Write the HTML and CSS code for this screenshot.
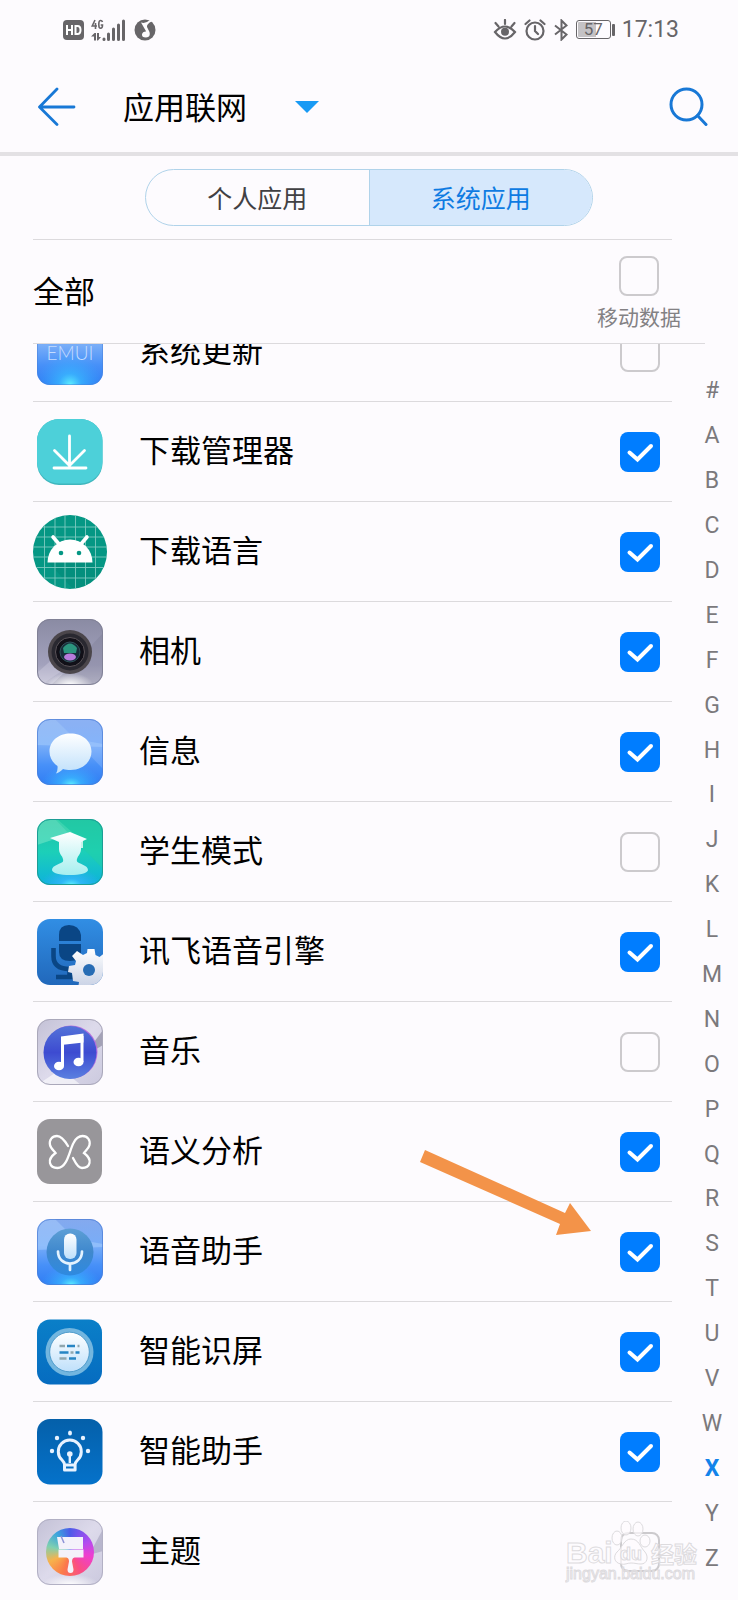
FILE: index.html
```html
<!DOCTYPE html>
<html lang="zh-CN">
<head>
<meta charset="utf-8">
<meta name="viewport" content="width=device-width, initial-scale=1">
<title>应用联网</title>
<link rel="stylesheet" href="styles.css">
</head>
<body>
<svg class="defs" width="0" height="0" aria-hidden="true">
  <defs>
    <linearGradient id="blue" x1="0" y1="0" x2="0" y2="1"><stop offset="0" stop-color="#84a9ee"/><stop offset=".4" stop-color="#78adf8"/><stop offset=".7" stop-color="#4790f8"/><stop offset="1" stop-color="#2f7df4"/></linearGradient>
    <radialGradient id="glow" cx=".5" cy="1" r=".5"><stop offset="0" stop-color="#5ff2ff"/><stop offset=".35" stop-color="#38b8ff" stop-opacity=".75"/><stop offset="1" stop-color="#3aa8ff" stop-opacity="0"/></radialGradient>
    <linearGradient id="silver" x1="0" y1="0" x2="1" y2="1"><stop offset="0" stop-color="#c3c1d6"/><stop offset=".5" stop-color="#dddaeb"/><stop offset="1" stop-color="#cbc9de"/></linearGradient>
    <linearGradient id="steel" x1="0" y1="0" x2="0" y2="1"><stop offset="0" stop-color="#8a8ba3"/><stop offset=".7" stop-color="#a3a2bd"/><stop offset="1" stop-color="#c9c8d8"/></linearGradient>
    <radialGradient id="shine" cx=".5" cy="1" r=".5"><stop offset="0" stop-color="#fff"/><stop offset="1" stop-color="#fff" stop-opacity="0"/></radialGradient>
    <linearGradient id="green" x1="0" y1="0" x2="0" y2="1"><stop offset="0" stop-color="#22c0a2"/><stop offset=".5" stop-color="#1ccfb8"/><stop offset="1" stop-color="#0db2dc"/></linearGradient>
    <linearGradient id="pearl" x1="0" y1="0" x2="0" y2="1"><stop offset="0" stop-color="#fff"/><stop offset="1" stop-color="#bfe0fb"/></linearGradient>
    <linearGradient id="mint" x1="0" y1="0" x2="0" y2="1"><stop offset="0" stop-color="#fff"/><stop offset="1" stop-color="#a5efef"/></linearGradient>
    <linearGradient id="engine" x1="0" y1="0" x2="0" y2="1"><stop offset="0" stop-color="#318ee4"/><stop offset="1" stop-color="#2168bb"/></linearGradient>
    <linearGradient id="gear" x1="0" y1="0" x2="0" y2="1"><stop offset="0" stop-color="#fff"/><stop offset="1" stop-color="#c6cfe4"/></linearGradient>
    <linearGradient id="disc" x1="0" y1="0" x2="0" y2="1"><stop offset="0" stop-color="#5373d8"/><stop offset=".5" stop-color="#3d4bd1"/><stop offset="1" stop-color="#5a80e0"/></linearGradient>
    <linearGradient id="deep" x1="0" y1="0" x2="0" y2="1"><stop offset="0" stop-color="#0a7fc8"/><stop offset="1" stop-color="#066cc0"/></linearGradient>
    <linearGradient id="deeper" x1="0" y1="0" x2="0" y2="1"><stop offset="0" stop-color="#0560aa"/><stop offset="1" stop-color="#0572ca"/></linearGradient>
    <linearGradient id="voice" x1="0" y1="0" x2="0" y2="1"><stop offset="0" stop-color="#5d9fd6"/><stop offset=".5" stop-color="#3f88cd"/><stop offset="1" stop-color="#2e8ae0"/></linearGradient>
    <clipPath id="tile"><rect x="4" y="4" width="66" height="66" rx="13"/></clipPath>
    <clipPath id="round"><circle cx="37" cy="37" r="37"/></clipPath>
    <clipPath id="wheel"><circle cx="37" cy="37" r="24"/></clipPath>
  </defs>
</svg>
<div class="app">
  <div class="status">
    <div class="status-left">
      <svg width="21" height="22" viewBox="0 0 21 22" aria-hidden="true"><rect y="1" width="21" height="20" rx="4" fill="#676568"/><path d="M4 6v10M9 6v10M4 11h5M12.500 6v10M12 7h2.500q3 0 3 4t-3 4H12" fill="none" stroke="#fff" stroke-width="2"/></svg>
      <svg width="36" height="22" viewBox="0 0 36 22" aria-hidden="true"><g fill="none" stroke="#676568" stroke-width="1.600"><path d="M4 1 1.200 7H6M4.500 4v6M11.500 3q-.7-1.800-2.200-1.500Q7.800 1.700 7.800 5.500t1.800 3.800q1.900 0 1.900-3.300H9.700"/></g><path d="M0 17.500 3.500 14H5v7.500H3v-4zM6 14h2v4h2l-3 3.500H6z" fill="#676568"/><path d="M13 20v.5M17.500 15v5.500M22.500 10v10.500M27.500 6v14.500M32.500 2v18.500" stroke="#676568" stroke-width="3" stroke-linecap="round"/></svg>
      <svg width="22" height="22" viewBox="0 0 22 22" aria-hidden="true"><circle cx="11" cy="11" r="10.500" fill="#676568"/><path d="M7 3.500q4.500 1.500 9-2.500l1.500 1.500Q12.500 5 13 8l2.500 5q1.500 5-3.500 5.500-4.500 0-4-3.500.8-3 4.200-2.500z" fill="#fdfbfe"/></svg>
    </div>
    <div class="status-right">
      <svg width="24" height="22" viewBox="0 0 24 22" aria-hidden="true"><g fill="none" stroke="#676568" stroke-width="2.200"><path d="M2 13q10-11 20 0-10 13-20 0zM12 5V1M5.500 7.500 2.500 4M18.500 7.500l3-3.500" stroke-linecap="round"/></g><circle cx="12" cy="12.800" r="4" fill="#676568"/></svg>
      <svg width="22" height="22" viewBox="0 0 22 22" aria-hidden="true"><g fill="none" stroke="#676568" stroke-width="2.200" stroke-linecap="round"><circle cx="11" cy="12" r="8.500"/><path d="M11 7v5l3 3M1.500 5l4-3.500M20.500 5l-4-3.500"/></g></svg>
      <svg width="16" height="22" viewBox="0 0 16 22" aria-hidden="true"><path d="M2 6.500 13.500 15.500 8.500 20.500V1.500l5 5L2 15.500" fill="none" stroke="#676568" stroke-width="2"/></svg>
      <span class="battery"><span class="battery-body">57</span></span>
      <time class="clock">17:13</time>
    </div>
  </div>

  <header class="header">
    <button class="icon-button" type="button" aria-label="返回">
      <svg width="38" height="40" viewBox="0 0 38 40"><path d="M19 2 1.500 20 19 37.500M2 20h34" fill="none" stroke="#1878d6" stroke-width="2.800" stroke-linecap="round" stroke-linejoin="round"/></svg>
    </button>
    <button class="title-button" type="button">
      <span class="title">应用联网</span>
      <svg width="24" height="12" viewBox="0 0 24 12" aria-hidden="true"><path d="M0 0h24L12 12z" fill="#189af4"/></svg>
    </button>
    <button class="icon-button" type="button" aria-label="搜索">
      <svg width="39" height="40" viewBox="0 0 39 40"><g fill="none" stroke="#1878d6" stroke-width="3" stroke-linecap="round"><circle cx="17.500" cy="17.500" r="15.500"/><path d="M28.500 28.500 37 37.500"/></g></svg>
    </button>
  </header>

  <div class="tabs-bar">
    <div class="tabs" role="tablist">
      <button class="tab" type="button" role="tab" aria-selected="false">个人应用</button>
      <button class="tab tab-active" type="button" role="tab" aria-selected="true">系统应用</button>
    </div>
  </div>

  <div class="all-row">
    <span class="all-name">全部</span>
    <label class="all-check"><input class="check" type="checkbox">移动数据</label>
  </div>

  <main class="content">
    <ul class="list">
      <li class="row">
        <svg class="app-icon" viewBox="0 0 74 74" aria-hidden="true"><g clip-path="url(#tile)"><path fill="url(#blue)" d="M4 4h66v66H4z"/><path fill="url(#glow)" d="M4 4h66v66H4z"/></g><rect x="4.500" y="4.500" width="65" height="65" rx="12.500" fill="none" stroke="#4a80d8" stroke-opacity=".5"/><text x="37" y="45" class="emui">EMUI</text></svg>
        <label class="name" for="a0">系统更新</label><input class="check" id="a0" type="checkbox">
      </li>
      <li class="row">
        <svg class="app-icon" viewBox="0 0 74 74" aria-hidden="true"><rect x="4" y="4" width="65.500" height="66" rx="22" fill="#3fb6bd"/><rect x="4" y="4" width="65.500" height="64.500" rx="22" fill="#4dd0d9"/><path d="M36.500 21v30M21.500 35.500l15 15 15-15M21 53h32" fill="none" stroke="#fff" stroke-width="2.800" stroke-linecap="round"/></svg>
        <label class="name" for="a1">下载管理器</label><input class="check" id="a1" type="checkbox" checked>
      </li>
      <li class="row">
        <svg class="app-icon" viewBox="0 0 74 74" aria-hidden="true"><g clip-path="url(#round)"><path fill="#059784" d="M0 0h74v74H0z"/><path fill="#04806f" d="M15 47h44l15 15v12H40z" opacity=".35"/><path d="M11.500 0v74M22 0v74M32 0v74M42.500 0v74M52.500 0v74M62.500 0v74M0 12h74M0 22h74M0 32h74M0 42h74M0 52.500h74M0 63h74" stroke="#7dcabf" stroke-width=".9"/></g><path d="M14.500 47.500a22.500 23 0 0 1 45 0z" fill="#fff"/><path d="M20 22l6 7M54 22l-6 7" stroke="#fff" stroke-width="3.600" stroke-linecap="round"/><circle cx="28" cy="38" r="2.300" fill="#059784"/><circle cx="46" cy="38" r="2.300" fill="#059784"/></svg>
        <label class="name" for="a2">下载语言</label><input class="check" id="a2" type="checkbox" checked>
      </li>
      <li class="row">
        <svg class="app-icon" viewBox="0 0 74 74" aria-hidden="true"><g clip-path="url(#tile)"><path fill="url(#steel)" d="M4 4h66v66H4z"/><path d="M70 18 45 45 18 70h52z" fill="#77768f" opacity=".3"/><path d="M4 58 24 40 30 55 8 70z" fill="#d6d5e6" opacity=".35"/><path fill="url(#shine)" d="M14 46h46v24H14z"/></g><rect x="4.500" y="4.500" width="65" height="65" rx="12.500" fill="none" stroke="#818196"/><circle cx="37" cy="37" r="22" fill="#4b464b"/><circle cx="37" cy="37" r="18.500" fill="#292830"/><circle cx="37" cy="37" r="14.500" fill="#111018" stroke="#5a5358"/><circle cx="37" cy="37" r="10" fill="#182d3a" stroke="#31515b"/><path d="M30 33q7-9 14 0l-1 5H31z" fill="#2c947e"/><ellipse cx="37" cy="42" rx="6" ry="3.500" fill="#b87bdc"/></svg>
        <label class="name" for="a3">相机</label><input class="check" id="a3" type="checkbox" checked>
      </li>
      <li class="row">
        <svg class="app-icon" viewBox="0 0 74 74" aria-hidden="true"><g clip-path="url(#tile)"><path fill="url(#blue)" d="M4 4h66v66H4z"/><path d="M4 30 4 4h18l20 20 28 5v3z" fill="#b5d6ff" opacity=".4"/><path d="M22 4l48 50V4z" fill="#9ec2ff" opacity=".3"/><path fill="url(#glow)" d="M8 28h60v42H8z"/></g><rect x="4.500" y="4.500" width="65" height="65" rx="12.500" fill="none" stroke="#4b7cd4" stroke-opacity=".7"/><path d="M37.500 18.500c12 0 21 7.500 21 18s-9 18.500-21 18.500c-3 0-5-.4-7.500-1-2.500 2.500-5 4-7 4.500q2-3 1.500-7.500C20 48 16.500 43 16.500 36.500c0-10.500 9-18 21-18z" fill="url(#pearl)"/></svg>
        <label class="name" for="a4">信息</label><input class="check" id="a4" type="checkbox" checked>
      </li>
      <li class="row">
        <svg class="app-icon" viewBox="0 0 74 74" aria-hidden="true"><g clip-path="url(#tile)"><path fill="url(#green)" d="M4 4h66v66H4z"/><path d="M4 30V4h20l16 14z" fill="#8bf0cf" opacity=".45"/><path d="M22 4h48v50z" fill="#21d0a5" opacity=".5"/><path fill="url(#glow)" d="M8 34h60v36H8z"/></g><rect x="4.500" y="4.500" width="65" height="65" rx="12.500" fill="none" stroke="#1d9d95"/><path d="M37 17 54 24l-6 3v7c0 3-1.500 6-3 7.500-1 2-1.500 3.500-1 5 1 2 11 3.500 11 8.500 0 3-8 5-18 5s-18-2-18-5c0-5 10-6.500 11-8.500.5-1.500 0-3-1-5-1.500-1.500-3-4.500-3-7.500v-7l-9-4z" fill="url(#mint)"/><path d="M49 26v7" stroke="#fff" stroke-width="1.500"/></svg>
        <label class="name" for="a5">学生模式</label><input class="check" id="a5" type="checkbox">
      </li>
      <li class="row">
        <svg class="app-icon" viewBox="0 0 74 74" aria-hidden="true"><g clip-path="url(#tile)"><path fill="url(#engine)" d="M4 4h66v66H4z"/><path d="M26 26V20q0-10 10-10t12 10v6zM26 29h22v8q0 9-11 9t-11-9z" fill="#0a4685"/><path d="M20.500 33v8q0 13 16 13v8M23 62h18" fill="none" stroke="#0a4685" stroke-width="4.600"/><path d="M54.500 34h7l1 6 4 2 5-4 5 5-3 6v11l2 14H45l1-7-6-1-1-8-4-1 1-6 6-1 1-4-4-5 5-5 6 4 4-2z" fill="url(#gear)"/><circle cx="56" cy="55" r="6" fill="#276cb4"/></g></svg>
        <label class="name" for="a6">讯飞语音引擎</label><input class="check" id="a6" type="checkbox" checked>
      </li>
      <li class="row">
        <svg class="app-icon" viewBox="0 0 74 74" aria-hidden="true"><g clip-path="url(#tile)"><path fill="url(#silver)" d="M4 4h66v66H4z"/><path d="M70 15 50 42l20-12z" fill="#807e96" opacity=".6"/><path d="M4 70 28 54l20 16z" fill="#fff" opacity=".6"/></g><rect x="4.500" y="4.500" width="65" height="65" rx="12.500" fill="none" stroke="#aaa8ba"/><circle cx="38" cy="37" r="26.500" fill="#b36cdf"/><circle cx="37" cy="37.500" r="26.500" fill="url(#disc)"/><path d="M49 21v26" fill="none" stroke="#fff" stroke-width="3"/><path d="M28 21.500 50.500 18.500v9L28 30z" fill="#fff"/><path d="M29.500 24v27" stroke="#fff" stroke-width="3"/><ellipse cx="26" cy="51" rx="5" ry="4.300" fill="#fff"/><ellipse cx="45.500" cy="47" rx="5" ry="4.300" fill="#fff"/></svg>
        <label class="name" for="a7">音乐</label><input class="check" id="a7" type="checkbox">
      </li>
      <li class="row">
        <svg class="app-icon" viewBox="0 0 74 74" aria-hidden="true"><rect x="4" y="4" width="65" height="65" rx="13" fill="#98969a"/><path d="M35 31c-3-5-6.500-10-11-10-5 0-8 4-7 9 .6 3 3 5 5.500 8-4 3-6.500 6-5.500 10 .8 3.500 4 5 7.500 5 10 0 12-18 16-25 2-4 5-7 9-7 5 0 8 4 7 9-.6 3-3 5-5.500 8 4 3 6.500 6 5.500 10-.8 3.500-4 5-7.500 5-4.500 0-7-6-9-10" fill="none" stroke="#fff" stroke-width="2.300" stroke-linecap="round"/></svg>
        <label class="name" for="a8">语义分析</label><input class="check" id="a8" type="checkbox" checked>
      </li>
      <li class="row">
        <svg class="app-icon" viewBox="0 0 74 74" aria-hidden="true"><g clip-path="url(#tile)"><path fill="url(#blue)" d="M4 4h66v66H4z"/><path d="M4 35V4h18l20 20 28 5v3z" fill="#b5d6ff" opacity=".4"/><path fill="url(#glow)" d="M8 28h60v42H8z"/></g><rect x="4.500" y="4.500" width="65" height="65" rx="12.500" fill="none" stroke="#4b7cd4" stroke-opacity=".7"/><circle cx="37" cy="37" r="23.500" fill="url(#voice)"/><rect x="31" y="18.500" width="12.500" height="25.500" rx="6" fill="url(#pearl)"/><path d="M25 36.500c0 16 24 16 24 0M37 49v6" fill="none" stroke="#e4f3ff" stroke-width="2.700" stroke-linecap="round"/></svg>
        <label class="name" for="a9">语音助手</label><input class="check" id="a9" type="checkbox" checked>
        <svg class="pointer" width="172" height="86" viewBox="0 0 172 86" aria-hidden="true"><path d="M5 1 0 13l140 62-4 11 35-4-21-28-5 10z" fill="#f39349"/></svg>
      </li>
      <li class="row">
        <svg class="app-icon" viewBox="0 0 74 74" aria-hidden="true"><rect x="4" y="4.500" width="65" height="65" rx="13" fill="url(#deep)"/><circle cx="36.500" cy="37" r="24" fill="#73b6df"/><circle cx="36.500" cy="37" r="19.800" fill="url(#pearl)" stroke="#3f91c4" stroke-width=".8"/><g fill="none" stroke-width="2.500"><path d="M34 31h8M26.500 37.500h9M42.500 37.500h4M36 43.500h7" stroke="#2685c4"/><path d="M26.500 31h5.500M44.500 31h2M37.500 37.500h3M26.500 43.500h7" stroke="#8fa6ae"/></g></svg>
        <label class="name" for="a10">智能识屏</label><input class="check" id="a10" type="checkbox" checked>
      </li>
      <li class="row">
        <svg class="app-icon" viewBox="0 0 74 74" aria-hidden="true"><rect x="4" y="4" width="65.500" height="65.500" rx="13" fill="url(#deeper)"/><g fill="none" stroke="#e8f2ff" stroke-width="3" stroke-linejoin="round"><path d="M31.500 55v-5.500c0-2-1-3-2.500-4.500a11.500 11.500 0 1 1 15.600 0c-1.500 1.500-2.500 2.500-2.500 4.500V55zM31.500 50h10.600"/><path d="M36.800 41v7" stroke-width="2.400"/></g><g fill="#e8f2ff"><circle cx="36.800" cy="39" r="2.800"/><ellipse cx="37" cy="18" rx="2" ry="2.500"/><circle cx="24" cy="23" r="2.200"/><circle cx="50" cy="23" r="2.200"/><circle cx="19" cy="36" r="2.200"/><circle cx="55" cy="36" r="2.200"/></g></svg>
        <label class="name" for="a11">智能助手</label><input class="check" id="a11" type="checkbox" checked>
      </li>
      <li class="row">
        <svg class="app-icon" viewBox="0 0 74 74" aria-hidden="true"><g clip-path="url(#tile)"><path fill="url(#silver)" d="M4 4h66v66H4z"/><path fill="url(#shine)" d="M8 48h58v22H8z"/><path d="M70 14 56 40l14-4z" fill="#9a98b4" opacity=".5"/></g><rect x="4.500" y="4.500" width="65" height="65" rx="12.500" fill="none" stroke="#b2b0c4"/><foreignObject x="13" y="13" width="48" height="48" clip-path="url(#wheel)"><div class="color-wheel"></div></foreignObject><path d="M24 22h26v12H26zM25.500 34.500h25v8h-9q-2.500.5-2.500 4l1.500 8q0 3.500-3 3.500t-3-3.500l1.500-8q0-3.500-2.500-4h-8z" fill="#f4f2fa"/><path d="M28 21l3 7" stroke="#8b92d6" stroke-width="1.500"/></svg>
        <label class="name" for="a12">主题</label><input class="check" id="a12" type="checkbox">
        <svg class="watermark" width="136" height="66" viewBox="0 0 136 66" aria-hidden="true">
          <g class="mark"><text x="1" y="42" class="mark-brand">Bai</text><text x="86" y="42" class="mark-cn">经验</text><ellipse cx="52" cy="17" rx="5" ry="7"/><ellipse cx="61" cy="7" rx="5" ry="7"/><ellipse cx="73" cy="8" rx="5" ry="7"/><ellipse cx="80" cy="20" rx="5" ry="6"/><path d="M66 18c8 0 9 8 14 13 4 5 2 12-4 12-4 0-6-1-10-1s-6 2-10 1c-7-1-8-8-4-12 5-4 7-13 14-13z"/><text x="55" y="39" class="mark-du">du</text><text x="1" y="58" class="mark-url">jingyan.baidu.com</text></g>
        </svg>
      </li>
    </ul>
    <nav class="index" aria-label="字母索引">
      <a href="#">#</a><a href="#">A</a><a href="#">B</a><a href="#">C</a><a href="#">D</a><a href="#">E</a><a href="#">F</a><a href="#">G</a><a href="#">H</a><a href="#">I</a><a href="#">J</a><a href="#">K</a><a href="#">L</a><a href="#">M</a><a href="#">N</a><a href="#">O</a><a href="#">P</a><a href="#">Q</a><a href="#">R</a><a href="#">S</a><a href="#">T</a><a href="#">U</a><a href="#">V</a><a href="#">W</a><a href="#" class="current">X</a><a href="#">Y</a><a href="#">Z</a>
    </nav>
  </main>
</div>
</body>
</html>
```
FILE: styles.css
```css
* {
  box-sizing: border-box;
}

body {
  margin: 0;
  background: #fdfbfe;
  color: #000;
  font-family: Roboto, "Noto Sans CJK SC", sans-serif;
}

button {
  padding: 0;
  border: 0;
  background: none;
  color: inherit;
  font: inherit;
}

svg {
  display: block;
  flex: none;
}

.defs {
  position: absolute;
}

.app {
  display: flex;
  flex-direction: column;
  height: 100vh;
  overflow: hidden;
}

/* status bar */
.status {
  display: flex;
  flex: none;
  align-items: center;
  justify-content: space-between;
  height: 59px;
  padding: 0 59px 0 63px;
  color: #676568;
}

.status-left,
.status-right {
  display: flex;
  align-items: center;
  gap: 7px;
}

.battery {
  display: flex;
  align-items: center;
  gap: 1px;
}

.battery::after {
  width: 3px;
  height: 12px;
  border-radius: 1px;
  background: #676568;
  content: "";
}

.battery-body {
  width: 35px;
  height: 19px;
  border: 1px solid #676568;
  border-radius: 3px;
  background: linear-gradient(90deg, #c4c2c5 57%, transparent 57%) content-box;
  padding: 1px;
  font-size: 17px;
  line-height: 15px;
  text-align: center;
}

.clock {
  font-size: 23px;
  line-height: 28px;
}

/* title bar */
.header {
  display: flex;
  flex: none;
  align-items: center;
  height: 97px;
  padding: 3px 30px 0 38px;
  border-bottom: 4px solid #e3e1e4;
}

.title-button {
  display: flex;
  flex: 1;
  align-items: center;
  gap: 48px;
  padding-left: 47px;
}

.title {
  padding-top: 4px;
  font-size: 31px;
  line-height: 40px;
}

/* tabs */
.tabs-bar {
  flex: none;
  margin: 0 66px 0 33px;
  padding: 13px 0 13px 33px;
  border-bottom: 1px solid #dcdadd;
}

.tabs {
  display: flex;
  max-width: 448px;
  height: 57px;
  margin: 0 auto;
  overflow: hidden;
  border: 1px solid #b0d3ea;
  border-radius: 29px;
}

.tab {
  flex: 1;
  padding-bottom: 2px;
  color: #414043;
  font-size: 25px;
}

.tab-active {
  border-left: 1px solid #b0d3ea;
  background: #d6e8fc;
  color: #0e7be2;
}

/* select all */
.all-row {
  display: flex;
  flex: none;
  align-items: center;
  justify-content: space-between;
  height: 104px;
  margin: 0 33px;
  padding-right: 24px;
  border-bottom: 1px solid #dcdadd;
}

.all-name {
  padding-bottom: 4px;
  font-size: 31px;
}

.all-check {
  display: flex;
  flex-direction: column;
  align-items: center;
  gap: 10px;
  padding-top: 3px;
  color: #838184;
  font-size: 21px;
  line-height: 24px;
}

.check {
  flex: none;
  width: 40px;
  height: 40px;
  margin: 0;
  appearance: none;
  border: 2px solid #cccacd;
  border-radius: 8px;
}

.check:checked {
  border: 0;
  background: #007dff url("data:image/svg+xml,%3Csvg xmlns='http://www.w3.org/2000/svg' viewBox='0 0 40 40'%3E%3Cpath d='M9.500 20.500 17.500 27.500 31 14' fill='none' stroke='white' stroke-width='4' stroke-linecap='round'/%3E%3C/svg%3E");
}

/* app list */
.content {
  display: flex;
  flex: 1;
  min-height: 0;
  overflow: hidden;
  padding-left: 33px;
}

.list {
  flex: 1;
  margin: 0;
  padding: 0;
  list-style: none;
}

.row {
  position: relative;
  display: flex;
  align-items: center;
  height: 100px;
  padding-right: 12px;
  border-bottom: 1px solid #dcdadd;
}

/* the list is scrolled part of the way through its first row */
.row:first-child {
  margin-top: -42px;
}

.app-icon {
  width: 74px;
  height: 74px;
}

.emui {
  fill: #c4dcff;
  font: 300 19px Lato, sans-serif;
  text-anchor: middle;
}

.color-wheel {
  height: 48px;
  background: conic-gradient(#4d5be8, #b14cf0 60deg, #ee3fd0 100deg, #fa4d85 150deg, #fb7a4a 200deg, #f7b24c 245deg, #7fd0b0 285deg, #3ba4dd 325deg, #4d5be8);
}

.name {
  flex: 1;
  padding-left: 32px;
  font-size: 31px;
  line-height: 44px;
}

.pointer {
  position: absolute;
  top: -53px;
  right: 80px;
}

.watermark {
  position: absolute;
  top: 19px;
  right: -29px;
}

.mark {
  fill: #fdfbfe;
  fill-opacity: .7;
  stroke: #dddbde;
  stroke-width: 1px;
}

.mark-brand {
  font: 700 30px "Liberation Sans", sans-serif;
}

.mark-cn {
  font: 700 23px "Noto Sans CJK SC", sans-serif;
}

.mark-du {
  font: 700 18px "Liberation Sans", sans-serif;
}

.mark-url {
  font: 16px "Liberation Sans", sans-serif;
}

/* alphabet index */
.index {
  display: flex;
  flex-direction: column;
  width: 66px;
  padding: 25px 0 19px 14px;
}

.index a {
  display: flex;
  flex: 1;
  align-items: center;
  justify-content: center;
  color: #7b797c;
  font-size: 23px;
  line-height: 28px;
  text-decoration: none;
}

.index .current {
  color: #1283ea;
  font-weight: 700;
}
```
